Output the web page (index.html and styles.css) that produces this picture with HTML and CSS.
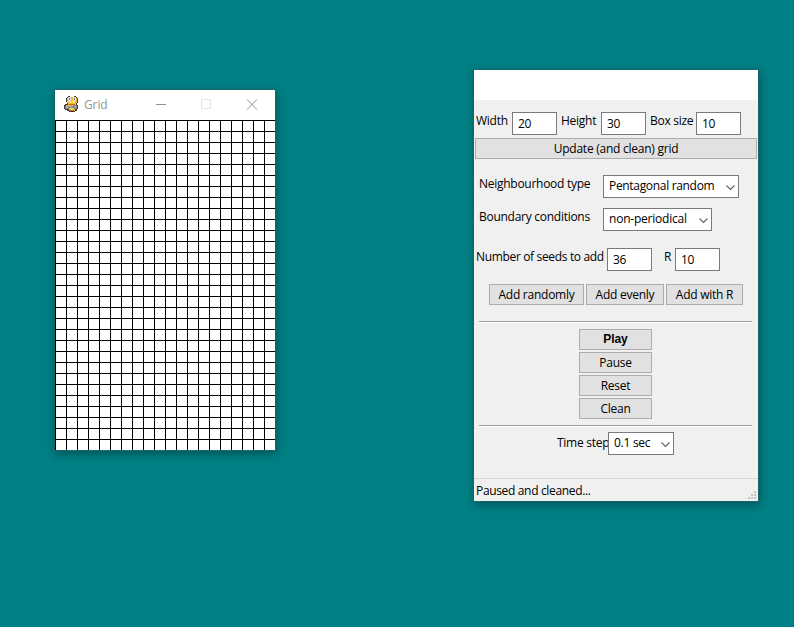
FILE: index.html
```html
<!DOCTYPE html>
<html lang="en">
<head>
<meta charset="utf-8">
<title>Grid</title>
<link rel="stylesheet" href="styles.css">
</head>
<body>
<main class="desktop">
  <section class="window grid-window">
    <header class="titlebar">
      <svg class="app-icon" width="16" height="17" viewBox="0 0 16 17" shape-rendering="crispEdges">
        <path fill="#4a382b" d="M4 0h2v1h4V0h2v1h1v1h1v5h-1v2h1v4h-1v2h-2v1H5v-1H3v-1H1v-1H0V9h1V8h2V6H2V2h1V1h1z"/>
        <path fill="#efb637" d="M4 1h8v1h1v5h-1v5h-1v3H5v-3H4V7H3V2h1z"/>
        <path fill="#ffdc62" d="M4 5h7v2H4zM6 12h3v2H6z"/>
        <path fill="#dcdce2" d="M4 1h3v4H4zM9 1h3v4H9z"/>
        <path fill="#85858d" d="M5 2h1v2H5zM10 2h1v2h-1zM1 10h4v3H1zM10 9h3v4h-3zM5 10h5v2H5z"/>
        <path fill="#aeb0b8" d="M2 9h2v3H2zM11 10h1v2h-1zM5 10h3v1H5z"/>
        <path fill="#b66b20" d="M5 8h6v1H5zM5 14h5v1H5z"/>
      </svg>
      <span class="title">Grid</span>
      <svg class="controls" width="102" height="12" viewBox="0 0 102 12" fill="none">
        <path stroke="#8b9490" d="M0 6.5h10"/>
        <path stroke="#e3e5e4" d="M45.500 1.500h9v9h-9z"/>
        <path stroke="#8b9490" d="M91 1.500l10 10M101 1.500l-10 10"/>
      </svg>
    </header>
    <div class="cells"></div>
  </section>

  <section class="window panel">
    <header class="panel-title"></header>
    <div class="row size-row">
      <span class="label width">Width</span><span class="field">20</span>
      <span class="label height">Height</span><span class="field">30</span>
      <span class="label box">Box size</span><span class="field">10</span>
    </div>
    <div class="button update">Update (and clean) grid</div>
    <div class="row type-row">
      <span class="label option">Neighbourhood type</span>
      <span class="field combo neighbourhood">Pentagonal random<svg class="chevron" width="9" height="6" viewBox="0 0 9 6"><path d="M.5.5l4 4 4-4"/></svg></span>
    </div>
    <div class="row boundary-row">
      <span class="label option">Boundary conditions</span>
      <span class="field combo boundary">non-periodical<svg class="chevron" width="9" height="6" viewBox="0 0 9 6"><path d="M.5.5l4 4 4-4"/></svg></span>
    </div>
    <div class="row seed-row">
      <span class="label seeds">Number of seeds to add</span><span class="field">36</span>
      <span class="label radius">R</span><span class="field">10</span>
    </div>
    <div class="add-row">
      <div class="button randomly">Add randomly</div>
      <div class="button evenly">Add evenly</div>
      <div class="button with-r">Add with R</div>
    </div>
    <div class="rule"></div>
    <div class="actions">
      <div class="button play">Play</div>
      <div class="button">Pause</div>
      <div class="button">Reset</div>
      <div class="button">Clean</div>
    </div>
    <div class="rule"></div>
    <div class="row time-row">
      <span class="label time">Time step</span>
      <span class="field combo step">0.1 sec<svg class="chevron" width="9" height="6" viewBox="0 0 9 6"><path d="M.5.5l4 4 4-4"/></svg></span>
    </div>
    <footer class="status">
      <span>Paused and cleaned...</span>
      <svg class="grip" width="8" height="8" viewBox="0 0 8 8" shape-rendering="crispEdges"><path fill="#c4c4c4" d="M6 0h2v2H6zM3 3h2v2H3zM6 3h2v2H6zM0 6h2v2H0zM3 6h2v2H3zM6 6h2v2H6z"/></svg>
    </footer>
  </section>
</main>
</body>
</html>
```

FILE: styles.css
```css
* { box-sizing: border-box; }
body { margin: 0; background: #008085; font: 12px/16px "Open Sans", "Noto Sans", sans-serif; color: #000; letter-spacing: -0.27px; }
.desktop { position: relative; width: 794px; height: 627px; overflow: hidden; }
.window { position: absolute; box-shadow: 0 0 0 1px #17666a, 1px 3px 9px 1px rgba(0, 25, 28, .42); white-space: nowrap; }
.grid-window { left: 55px; top: 90px; width: 220px; height: 360px; background: #fff; }
.titlebar { display: flex; height: 30px; align-items: flex-start; padding: 6px 0 0 9px; }
.title { width: 72px; margin: 1px 0 0 4px; color: #8b9b8f; letter-spacing: -0.1px; }
.controls { margin-top: 2px; }
.app-icon { display: block; }
.cells {
  height: 330px;
  background-image: linear-gradient(90deg, #000 1px, transparent 1px), linear-gradient(#000 1px, transparent 1px);
  background-size: 11px 11px;
}
.panel { left: 474px; top: 70px; width: 284px; height: 431px; background: #f0f0f0; }
.panel-title { height: 30px; background: #fff; }
.row { display: flex; height: 23px; align-items: flex-start; }
.label { flex: none; margin-top: 1px; }
.field { flex: none; width: 45px; height: 23px; padding: 2px 5px 0; border: 1px solid #7a7a7a; background: #fff; line-height: 17px; }
.button { height: 21px; border: 1px solid #adadad; background: #e1e1e1; text-align: center; line-height: 19px; letter-spacing: -0.25px; }
.size-row { margin-top: 12px; padding-left: 2px; }
.width { width: 36px; }
.height { width: 40px; margin-left: 4px; }
.box { width: 46px; margin-left: 4px; }
.update { margin: 3px 1px 0; }
.type-row { margin-top: 16px; padding-left: 5px; }
.boundary-row { margin-top: 10px; padding-left: 5px; }
.option { width: 124px; }
.combo { display: flex; justify-content: space-between; padding: 2px 3px 0 5px; line-height: 16px; }
.chevron { flex: none; margin-top: 7px; fill: none; stroke: #606060; stroke-width: 1.1; }
.neighbourhood { width: 136px; letter-spacing: -0.32px; }
.boundary { width: 109px; letter-spacing: -0.22px; }
.seed-row { margin-top: 17px; padding-left: 2px; }
.seeds { width: 131px; letter-spacing: -0.34px; }
.radius { width: 11px; margin-left: 12px; }
.add-row { display: flex; gap: 2px; margin: 13px 0 16px 15px; }
.randomly { width: 95px; }
.evenly { width: 78px; }
.with-r { width: 77px; }
.rule { width: 273px; height: 2px; margin-left: 5px; border-top: 1px solid #a0a0a0; border-bottom: 1px solid #fff; }
.actions { display: flex; flex-direction: column; gap: 2px; width: 73px; margin: 6px 0 6px 105px; }
.play { font-family: "Liberation Sans", sans-serif; font-weight: 700; letter-spacing: -0.1px; }
.time-row { margin-top: 5px; padding-left: 83px; }
.time { width: 51px; margin-top: 3px; }
.step { width: 66px; }
.status { display: flex; justify-content: space-between; height: 23px; margin-top: 23px; padding: 4px 2px 0; border-top: 1px solid #d7d7d7; letter-spacing: -0.34px; }
.grip { margin-top: 8px; }
```
